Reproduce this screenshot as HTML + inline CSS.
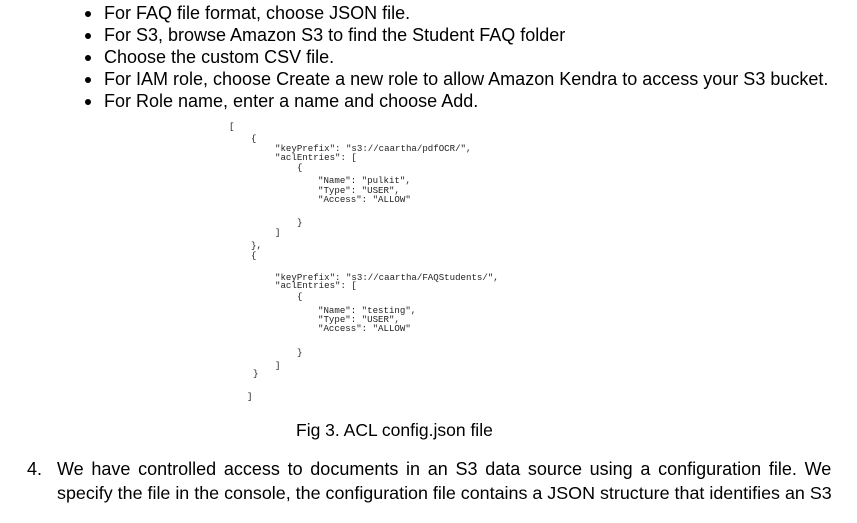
<!DOCTYPE html>
<html><head><style>
body{margin:0;width:857px;height:523px;background:#fff;position:relative;overflow:hidden;font-family:"Liberation Sans",Arial,sans-serif;color:#000}
.t{position:absolute;white-space:nowrap;font-size:18px;line-height:20px}
.b{position:absolute;width:6px;height:6px;border-radius:50%;background:#000;left:85px}
.c{position:absolute;white-space:nowrap;font-family:"Liberation Mono",monospace;font-size:9.1px;line-height:10px;color:#222}
</style></head><body>
<div class="b" style="top:11px"></div><div class="t" style="left:104px;top:3px">For FAQ file format, choose JSON file.</div>
<div class="b" style="top:33px"></div><div class="t" style="left:104px;top:25px">For S3, browse Amazon S3 to find the Student FAQ folder</div>
<div class="b" style="top:55px"></div><div class="t" style="left:104px;top:47px">Choose the custom CSV file.</div>
<div class="b" style="top:77px"></div><div class="t" style="left:104px;top:69px">For IAM role, choose Create a new role to allow Amazon Kendra to access your S3 bucket.</div>
<div class="b" style="top:99px"></div><div class="t" style="left:104px;top:91px">For Role name, enter a name and choose Add.</div>

<div class="c" style="left:229px;top:122px">[</div>
<div class="c" style="left:251px;top:134px">{</div>
<div class="c" style="left:275px;top:144px">"keyPrefix": "s3://caartha/pdfOCR/",</div>
<div class="c" style="left:275px;top:153px">"aclEntries": [</div>
<div class="c" style="left:297px;top:163px">{</div>
<div class="c" style="left:318px;top:176px">"Name": "pulkit",</div>
<div class="c" style="left:318px;top:186px">"Type": "USER",</div>
<div class="c" style="left:318px;top:195px">"Access": "ALLOW"</div>
<div class="c" style="left:297px;top:218px">}</div>
<div class="c" style="left:275px;top:228px">]</div>
<div class="c" style="left:251px;top:241px">},</div>
<div class="c" style="left:251px;top:251px">{</div>
<div class="c" style="left:275px;top:273px">"keyPrefix": "s3://caartha/FAQStudents/",</div>
<div class="c" style="left:275px;top:281px">"aclEntries": [</div>
<div class="c" style="left:297px;top:292px">{</div>
<div class="c" style="left:318px;top:306px">"Name": "testing",</div>
<div class="c" style="left:318px;top:315px">"Type": "USER",</div>
<div class="c" style="left:318px;top:324px">"Access": "ALLOW"</div>
<div class="c" style="left:297px;top:348px">}</div>
<div class="c" style="left:275px;top:361px">]</div>
<div class="c" style="left:253px;top:369px">}</div>
<div class="c" style="left:247px;top:392px">]</div>

<div class="t" style="left:296px;top:420px;font-size:17.5px">Fig 3. ACL config.json file</div>
<div class="t" style="left:27px;top:459px">4.</div>
<div class="t" style="left:57px;top:459px;word-spacing:2.7px">We have controlled access to documents in an S3 data source using a configuration file. We</div>
<div class="t" style="left:57px;top:483px;font-size:17.9px">specify the file in the console, the configuration file contains a JSON structure that identifies an S3</div>
</body></html>
